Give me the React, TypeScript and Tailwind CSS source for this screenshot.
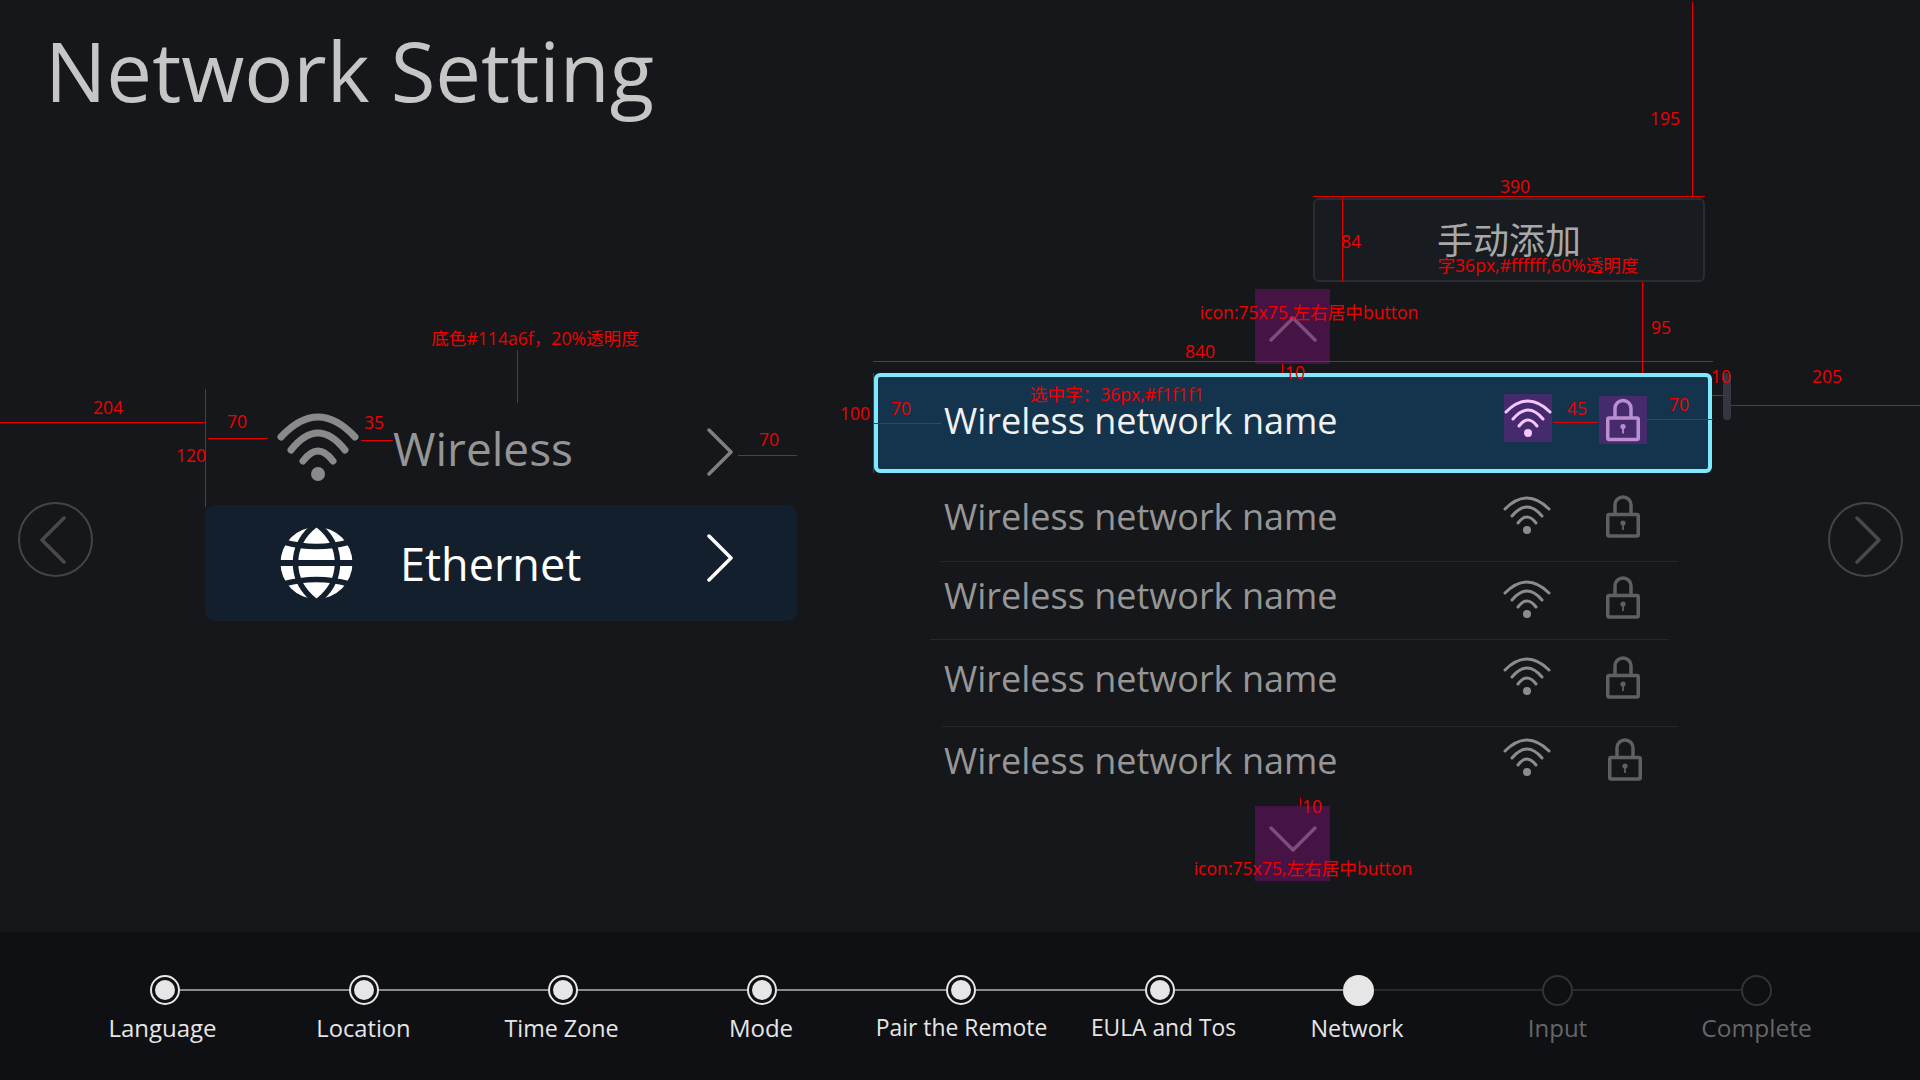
import type { ReactNode } from 'react'

const steps = [
  { label: 'Language', state: 'done', labelClass: '-ml-[4px] text-[24px]' },
  { label: 'Location', state: 'done', labelClass: 'text-[23.7px]' },
  { label: 'Time Zone', state: 'done', labelClass: '-ml-[2px] text-[23.3px]' },
  { label: 'Mode', state: 'done', labelClass: '-ml-[1px] text-[24px]' },
  { label: 'Pair the Remote', state: 'done', labelClass: 'ml-[2px] text-[22.9px]' },
  { label: 'EULA and Tos', state: 'done', labelClass: 'ml-[8px] text-[22.8px]' },
  { label: 'Network', state: 'current', labelClass: '-ml-[3px] text-[23.4px]' },
  { label: 'Input', state: 'todo', labelClass: 'text-[24px]' },
  { label: 'Complete', state: 'todo', labelClass: 'text-[24.5px]' },
]

const networks = [
  { row: 'h-[89px] ml-[66px] mr-[34px] pl-[4px] pr-[38px] pt-[23px] border-b', name: '-mt-[4px]', wifi: 'mt-0', lock: '-mt-[1px]' },
  { row: 'h-[78px] ml-[56px] mr-[43px] pl-[14px] pr-[29px] pt-[14px] border-b', name: '-mt-[5px]', wifi: 'mt-[4px]', lock: '' },
  { row: 'h-[87px] ml-[68px] mr-[34px] pl-[2px] pr-[38px] pt-[16px] border-b', name: '-mt-[2px]', wifi: 'mt-[1px]', lock: '' },
  { row: 'h-[79px] ml-[66px] mr-[34px] pl-[4px] pr-[36px] pt-[11px]', name: '-mt-[2px]', wifi: 'ml-[-2px] mr-[2px]', lock: '' },
]

function WifiSmall({ className }: { className: string }) {
  return (
    <svg viewBox="0 0 48 38" fill="none" stroke="currentColor" strokeWidth="3" strokeLinecap="round" className={className}>
      <path d="M2 13Q24 -9 46 13" />
      <path d="M9 20Q24 2 39 20" />
      <path d="M15 27Q24 15 33 27" />
      <circle cx="24" cy="34" r="4" fill="currentColor" stroke="none" />
    </svg>
  )
}

function Lock({ className }: { className: string }) {
  return (
    <svg viewBox="0 0 34 43" fill="none" stroke="currentColor" strokeWidth="3.5" className={className}>
      <path d="M9 19V10a8 8 0 0 1 16 0v9" />
      <rect x="1.75" y="19.5" width="30.5" height="21.5" rx="1.5" />
      <circle cx="17" cy="28" r="2.6" fill="currentColor" stroke="none" />
      <path d="M17 29v6" strokeWidth="1.8" />
    </svg>
  )
}

function Chevron({ className, dir = 'right' }: { className: string; dir?: 'left' | 'right' }) {
  return (
    <svg viewBox="0 0 26 48" fill="none" stroke="currentColor" strokeWidth="3.5" strokeLinecap="round" strokeLinejoin="round" className={className}>
      <polyline points={dir === 'right' ? '2,2 24,24 2,46' : '24,2 2,24 24,46'} />
    </svg>
  )
}

function Globe() {
  return (
    <svg viewBox="0 0 72 72" className="w-[73px] h-[72px]" fill="none" stroke="#131f2c" strokeWidth="5.5">
      <circle cx="36" cy="36" r="36" fill="#ffffff" stroke="none" />
      <path d="M36 -3C8 18 8 54 36 75" />
      <path d="M36 -3C64 18 64 54 36 75" />
      <path d="M3 15Q36 24 69 15" />
      <path d="M3 57Q36 48 69 57" />
      <path d="M-2 36H74" strokeWidth="6" />
    </svg>
  )
}

function Note({ className, children }: { className: string; children: ReactNode }) {
  return <div className={`absolute whitespace-nowrap text-[17.6px] leading-none text-[#f00000] -translate-x-1/2 -translate-y-1/2 ${className}`}>{children}</div>
}

function Rule({ className }: { className: string }) {
  return <div className={`absolute bg-[#e60000] ${className}`} />
}

// red redline marks from the spec sheet, they sit on top of the page
function Annotations() {
  return (
    <>
      <Rule className="left-[1692px] top-[2px] w-px h-[196px]" />
      <Note className="left-[1665px] top-[119px]">195</Note>
      <Note className="left-[1515px] top-[187px]">390</Note>
      <Rule className="left-[1313px] top-[196px] w-[392px] h-px" />
      <Rule className="left-[1342px] top-[198px] w-px h-[84px]" />
      <Note className="left-[1351px] top-[242px]">84</Note>
      <Note className="left-[1538px] top-[266px]">字36px,#ffffff,60%透明度</Note>
      <Rule className="left-[1642px] top-[282px] w-px h-[91px]" />
      <Note className="left-[1661px] top-[328px]">95</Note>
      <Rule className="left-[873px] top-[361px] w-[840px] h-px" />
      <Note className="left-[1200px] top-[352px]">840</Note>
      <Note className="left-[1309px] top-[313px]">icon:75x75,左右居中button</Note>
      <Rule className="left-[1282px] top-[364px] w-px h-[9px]" />
      <Note className="left-[1295px] top-[373px]">10</Note>
      <Note className="left-[1117px] top-[395px]">选中字：36px,#f1f1f1</Note>
      <Rule className="left-[873px] top-[373px] w-px h-[100px]" />
      <Note className="left-[855px] top-[414px]">100</Note>
      <Note className="left-[901px] top-[409px]">70</Note>
      <Rule className="left-[874px] top-[423px] w-[67px] h-px" />
      <Note className="left-[1577px] top-[409px]">45</Note>
      <Rule className="left-[1553px] top-[422px] w-[45px] h-px" />
      <Note className="left-[1679px] top-[405px]">70</Note>
      <Rule className="left-[1647px] top-[419px] w-[66px] h-px" />
      <Note className="left-[1721px] top-[377px]">10</Note>
      <Rule className="left-[1712px] top-[395px] w-[12px] h-px" />
      <Note className="left-[1827px] top-[377px]">205</Note>
      <Rule className="left-[1731px] top-[405px] w-[189px] h-px" />
      <Note className="left-[535px] top-[339px]">底色#114a6f，20%透明度</Note>
      <Rule className="left-[517px] top-[350px] w-px h-[53px]" />
      <Note className="left-[108px] top-[408px]">204</Note>
      <Rule className="left-0 top-[422px] w-[205px] h-px" />
      <Rule className="left-[205px] top-[389px] w-px h-[118px]" />
      <Note className="left-[237px] top-[422px]">70</Note>
      <Rule className="left-[208px] top-[438px] w-[60px] h-px" />
      <Note className="left-[374px] top-[423px]">35</Note>
      <Rule className="left-[361px] top-[440px] w-[32px] h-px" />
      <Note className="left-[191px] top-[456px]">120</Note>
      <Note className="left-[769px] top-[440px]">70</Note>
      <Rule className="left-[738px] top-[455px] w-[59px] h-px" />
      <Note className="left-[1312px] top-[807px]">10</Note>
      <Rule className="left-[1300px] top-[798px] w-px h-[8px]" />
      <Note className="left-[1303px] top-[869px]">icon:75x75,左右居中button</Note>
    </>
  )
}

function Stepper() {
  return (
    <footer className="h-[148px] bg-[#0e1014] pl-[65px] pt-[43px] flex">
      {steps.map((step, i) => (
        <div key={step.label} className="w-[199px] flex flex-col items-center">
          <div className="w-full h-[30px] flex items-center">
            <div className={`flex-1 h-[2px] ${i === 0 ? '' : i <= 6 ? 'bg-[#8a8a8a]' : 'bg-[#2a2a2a]'}`} />
            {step.state === 'done' && (
              <div className="w-[30px] h-[30px] rounded-full border-2 border-[#e6e6e6] flex items-center justify-center">
                <div className="w-[20px] h-[20px] rounded-full bg-[#e6e6e6]" />
              </div>
            )}
            {step.state === 'current' && <div className="w-[31px] h-[31px] rounded-full bg-[#e6e6e6]" />}
            {step.state === 'todo' && <div className="w-[31px] h-[31px] rounded-full border-2 border-[#333333]" />}
            <div className={`flex-1 h-[2px] ${i === 8 ? '' : i <= 5 ? 'bg-[#8a8a8a]' : 'bg-[#2a2a2a]'}`} />
          </div>
          <div className={`mt-[7px] leading-[32px] whitespace-nowrap ${step.state === 'todo' ? 'text-[#666666]' : 'text-[#e6e6e6]'} ${step.labelClass}`}>
            {step.label}
          </div>
        </div>
      ))}
    </footer>
  )
}

export default function App() {
  return (
    <div className="relative w-[1920px] h-[1080px] overflow-hidden bg-[#15171b] font-['Open_Sans','Noto_Sans_CJK_SC',sans-serif]">
      <main className="h-[932px]">
        <h1 className="h-[198px] pl-[45px] pt-[16px] text-[81.5px] leading-[110px] text-[#c6c6c6]">Network Setting</h1>

        <div className="flex items-start pl-[18px]">
          <button className="mt-[304px] w-[75px] h-[75px] rounded-full border-2 border-[#444444] flex items-center justify-center text-[#4a4a4a] pr-[5px]">
            <Chevron dir="left" className="w-[26px] h-[48px]" />
          </button>

          <section className="ml-[112px] mt-[208px] w-[592px]">
            <div className="h-[100px] mx-[25px] border-b border-[#24262a] flex items-center -mb-px">
              <div className="ml-[47px] text-[#8a8a8a] mt-[-18px]">
                <svg viewBox="0 0 82 68" fill="none" stroke="currentColor" strokeWidth="7" strokeLinecap="round" className="w-[82px] h-[68px]">
                  <path d="M4 24Q41 -16 78 24" />
                  <path d="M14 37Q41 3 68 37" />
                  <path d="M26 48Q41 28 56 48" />
                  <circle cx="41" cy="61" r="7" fill="currentColor" stroke="none" />
                </svg>
              </div>
              <div className="ml-[34px] text-[46px] leading-none text-[#959595] mt-[-15px]">Wireless</div>
              <Chevron className="ml-auto mr-[39px] w-[26px] h-[48px] text-[#808080] mt-[-7px]" />
            </div>
            <div className="h-[116px] rounded-[10px] bg-[#131f2c] flex items-center pl-[75px] pr-[64px]">
              <Globe />
              <div className="ml-[47px] text-[45px] leading-none text-white mt-[1px]">Ethernet</div>
              <Chevron className="ml-auto w-[26px] h-[48px] text-white -mt-[10px]" />
            </div>
          </section>

          <section className="ml-[77px] w-[838px] flex flex-col">
            <button className="self-end mr-[7px] w-[392px] h-[84px] rounded-[6px] border-2 border-[#2a2c30] bg-[#181b20] text-[36px] leading-none text-[#a8a8a8] pt-[2px]">
              手动添加
            </button>
            <div className="mt-[7px] ml-[381px] w-[75px] h-[75px] bg-[#451445] flex justify-center pt-[27px] text-[#7d4d7d]">
              <svg viewBox="0 0 48 26" fill="none" stroke="currentColor" strokeWidth="3.5" strokeLinecap="round" strokeLinejoin="round" className="w-[48px] h-[26px]">
                <polyline points="2,24 24,2 46,24" />
              </svg>
            </div>
            <div className="mt-[9px] h-[100px] rounded-[6px] border-4 border-[#7fe9ff] bg-[#14344e] flex items-start pl-[66px] pr-[61px] pt-[17px]">
              <div className="flex-1 text-[36px] leading-[50px] text-[#f1f1f1] mt-[2px]">Wireless network name</div>
              <div className="w-[48px] h-[48px] bg-[#462a6e] text-[#f5c6ff] flex items-center justify-center">
                <WifiSmall className="w-[48px] h-[38px]" />
              </div>
              <div className="ml-[47px] mt-[2px] w-[48px] h-[48px] bg-[#462a6e] text-[#b98fd0] flex items-center justify-center">
                <Lock className="w-[34px] h-[44px]" />
              </div>
            </div>
            {networks.map((net) => (
              <div key={net.row} className={`flex items-start border-[#25272b] ${net.row}`}>
                <div className={`flex-1 text-[36px] leading-[50px] text-[#969696] ${net.name}`}>Wireless network name</div>
                <WifiSmall className={`w-[48px] h-[38px] text-[#8c8c8c] ${net.wifi}`} />
                <Lock className={`ml-[55px] w-[34px] h-[43px] text-[#5f6064] ${net.lock}`} />
              </div>
            ))}
            <div className="ml-[381px] w-[75px] h-[75px] bg-[#451445] flex justify-center pt-[20px] text-[#7d4d7d]">
              <svg viewBox="0 0 48 26" fill="none" stroke="currentColor" strokeWidth="3.5" strokeLinecap="round" strokeLinejoin="round" className="w-[48px] h-[26px]">
                <polyline points="2,2 24,24 46,2" />
              </svg>
            </div>
          </section>

          <div className="ml-[11px] mt-[175px] w-[8px] h-[47px] rounded-full bg-[#333740]" />

          <button className="ml-[97px] mt-[304px] w-[75px] h-[75px] rounded-full border-2 border-[#444444] flex items-center justify-center text-[#4a4a4a] pl-[5px]">
            <Chevron className="w-[26px] h-[48px]" />
          </button>
        </div>
      </main>

      <Stepper />
      <Annotations />
    </div>
  )
}
